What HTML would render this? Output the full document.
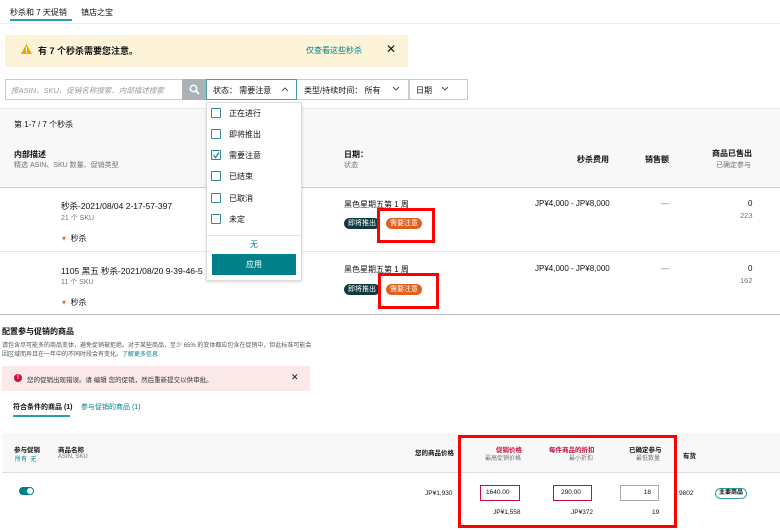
<!DOCTYPE html>
<html><head><meta charset="utf-8"><style>
*{margin:0;padding:0;box-sizing:border-box}
body{width:780px;height:530px;overflow:hidden;background:#fff;font-family:"Liberation Sans","Noto Sans CJK SC",sans-serif;color:#0f1111;position:relative;font-size:8px}
.a{position:absolute;white-space:nowrap}
.g{color:#6f7373}
.t{color:#00818a}
.cb{position:absolute;width:10px;height:10px;border:1px solid #2f8a94;border-radius:1px;background:#fff}
.rb{position:absolute;border:3px solid #f00}
.pill{position:absolute;height:11px;border-radius:6px;color:#fff;font-size:7px;line-height:11px;padding:0 4px}
</style></head><body>
<div class="a" style="left:10px;top:7px;font-size:8px">秒杀和 7 天促销</div>
<div class="a" style="left:81px;top:7px;font-size:8px">镇店之宝</div>
<div class="a" style="left:10px;top:19px;width:62px;height:2px;background:#2f9ea8"></div>
<div class="a" style="left:0;top:23px;width:780px;height:1px;background:#eee"></div>

<div class="a" style="left:5px;top:35px;width:403px;height:32px;background:#fcf3d8"></div>
<svg class="a" style="left:21px;top:44px" width="11" height="10" viewBox="0 0 11 10"><path d="M5.5 0L11 10H0z" fill="#f0a500"/><rect x="5" y="3" width="1" height="4" fill="#fff"/><rect x="5" y="8" width="1" height="1" fill="#fff"/></svg>
<div class="a" style="left:38px;top:44px;font-size:9px;font-weight:bold">有 7 个秒杀需要您注意。</div>
<div class="a t" style="left:306px;top:45px;font-size:8px">仅查看这些秒杀</div>
<div class="a" style="left:386px;top:42px;font-size:12px">✕</div>

<div class="a" style="left:5px;top:79px;width:177px;height:21px;border:1px solid #ccc;border-right:none"></div>
<div class="a g" style="left:11px;top:85px;font-size:7.5px;font-style:italic;color:#999">按ASIN、SKU、促销名称搜索、内部描述搜索</div>
<div class="a" style="left:182px;top:79px;width:24px;height:21px;background:#a9b3b5"></div>
<svg class="a" style="left:189px;top:84px" width="11" height="11" viewBox="0 0 11 11"><circle cx="4.5" cy="4.5" r="3.2" stroke="#fff" stroke-width="1.5" fill="none"/><path d="M7 7L10 10" stroke="#fff" stroke-width="1.8"/></svg>
<div class="a" style="left:206px;top:79px;width:91px;height:21px;border:1px solid #4a9aa3"></div>
<div class="a" style="left:213px;top:85px;font-size:8px">状态：&nbsp;需要注意</div>
<svg class="a" style="left:281px;top:87px" width="8" height="5"><path d="M1 4L4 1L7 4" stroke="#555" fill="none"/></svg>
<div class="a" style="left:297px;top:79px;width:112px;height:21px;border:1px solid #ccc;border-left:none"></div>
<div class="a" style="left:304px;top:85px;font-size:8px">类型/持续时间：&nbsp;所有</div>
<svg class="a" style="left:392px;top:86px" width="8" height="5"><path d="M1 1L4 4L7 1" stroke="#555" fill="none"/></svg>
<div class="a" style="left:409px;top:79px;width:59px;height:21px;border:1px solid #ccc"></div>
<div class="a" style="left:416px;top:85px;font-size:8px">日期</div>
<svg class="a" style="left:441px;top:86px" width="8" height="5"><path d="M1 1L4 4L7 1" stroke="#555" fill="none"/></svg>

<div class="a" style="left:0;top:108px;width:780px;height:79px;background:#f8f8f8;border-top:1px solid #e7e7e7"></div>
<div class="a" style="left:14px;top:119px;font-size:8px">第 1-7 / 7 个秒杀</div>
<div class="a" style="left:14px;top:149px;font-size:8px;font-weight:bold">内部描述</div>
<div class="a g" style="left:14px;top:160px;font-size:7px">精选 ASIN、SKU 数量、促销类型</div>
<div class="a" style="left:344px;top:149px;font-size:8px;font-weight:bold">日期：</div>
<div class="a g" style="left:344px;top:160px;font-size:7px">状态</div>
<div class="a" style="left:577px;top:154px;font-size:8px;font-weight:bold">秒杀费用</div>
<div class="a" style="left:645px;top:154px;font-size:8px;font-weight:bold">销售额</div>
<div class="a" style="left:712px;top:148px;font-size:8px;font-weight:bold">商品已售出</div>
<div class="a g" style="left:716px;top:160px;font-size:7px">已确定参与</div>
<div class="a" style="left:0;top:187px;width:780px;height:1px;background:#ccc"></div>

<div class="a" style="left:61px;top:200px;font-size:8.5px">秒杀-2021/08/04 2-17-57-397</div>
<div class="a g" style="left:61px;top:213px;font-size:7px">21 个 SKU</div>
<div class="a" style="left:62px;top:233px;font-size:8px"><span style="color:#e8702a">▾</span>&nbsp; 秒杀</div>
<div class="a" style="left:344px;top:199px;font-size:8px">黑色星期五第 1 周</div>
<div class="pill" style="left:344px;top:218px;background:#0f3a40">即将推出</div>
<div class="pill" style="left:386px;top:218px;background:#e2601d">需要注意</div>
<div class="a" style="left:535px;top:199px;font-size:8px">JP¥4,000 - JP¥8,000</div>
<div class="a g" style="left:661px;top:199px">—</div>
<div class="a" style="left:748px;top:199px;font-size:8px">0</div>
<div class="a g" style="left:740px;top:211px;font-size:7.5px">223</div>
<div class="a" style="left:0;top:251px;width:780px;height:1px;background:#e7e7e7"></div>

<div class="a" style="left:61px;top:265px;font-size:8.5px">1105 黑五 秒杀-2021/08/20 9-39-46-5</div>
<div class="a g" style="left:61px;top:277px;font-size:7px">11 个 SKU</div>
<div class="a" style="left:62px;top:297px;font-size:8px"><span style="color:#e8702a">▾</span>&nbsp; 秒杀</div>
<div class="a" style="left:344px;top:264px;font-size:8px">黑色星期五第 1 周</div>
<div class="pill" style="left:344px;top:284px;background:#0f3a40">即将推出</div>
<div class="pill" style="left:386px;top:284px;background:#e2601d">需要注意</div>
<div class="a" style="left:535px;top:264px;font-size:8px">JP¥4,000 - JP¥8,000</div>
<div class="a g" style="left:661px;top:264px">—</div>
<div class="a" style="left:748px;top:264px;font-size:8px">0</div>
<div class="a g" style="left:740px;top:276px;font-size:7.5px">162</div>
<div class="a" style="left:0;top:314px;width:780px;height:1px;background:#bbb"></div>

<div class="rb" style="left:377px;top:208px;width:58px;height:35px"></div>
<div class="rb" style="left:378px;top:273px;width:61px;height:36px"></div>

<!-- dropdown -->
<div class="a" style="left:206px;top:102px;width:96px;height:179px;background:#fff;border:1px solid #ddd;box-shadow:0 1px 3px rgba(0,0,0,.15)"></div>
<div class="cb" style="left:211px;top:108px"></div><div class="a" style="left:229px;top:108px;font-size:8px">正在进行</div>
<div class="cb" style="left:211px;top:129px"></div><div class="a" style="left:229px;top:129px;font-size:8px">即将推出</div>
<div class="cb" style="left:211px;top:150px;background:#eef6f7"></div><svg class="a" style="left:212px;top:151px" width="8" height="8"><path d="M1.5 4L3.5 6.5L7 1.5" stroke="#2f8a94" stroke-width="1.3" fill="none"/></svg><div class="a" style="left:229px;top:150px;font-size:8px">需要注意</div>
<div class="cb" style="left:211px;top:171px"></div><div class="a" style="left:229px;top:171px;font-size:8px">已结束</div>
<div class="cb" style="left:211px;top:193px"></div><div class="a" style="left:229px;top:193px;font-size:8px">已取消</div>
<div class="cb" style="left:211px;top:214px"></div><div class="a" style="left:229px;top:214px;font-size:8px">未定</div>
<div class="a" style="left:207px;top:235px;width:94px;height:1px;background:#e3e3e3"></div>
<div class="a t" style="left:250px;top:239px;font-size:8px">无</div>
<div class="a" style="left:212px;top:254px;width:84px;height:21px;background:#00818a;color:#fff;font-size:8px;text-align:center;line-height:21px">应用</div>

<!-- bottom -->
<div class="a" style="left:2px;top:326px;font-size:8px;font-weight:bold">配置参与促销的商品</div>
<div class="a g" style="left:2px;top:340px;font-size:6px;color:#555">请包含尽可能多的商品变体，避免促销被拒绝。对于某些商品，至少 65% 的变体都应包含在促销中，但此标准可能会</div>
<div class="a g" style="left:2px;top:349px;font-size:6px;color:#555">因区域而异且在一年中的不同时段会有变化。<span class="t">了解更多信息</span></div>
<div class="a" style="left:2px;top:366px;width:308px;height:25px;background:#fbe9e9"></div>
<div class="a" style="left:14px;top:374px;width:8px;height:8px;border-radius:50%;background:#cc0c39;color:#fff;font-size:6px;text-align:center;line-height:8px;font-weight:bold">!</div>
<div class="a" style="left:27px;top:374px;font-size:6.5px;color:#333">您的促销出现错误。请 编辑 您的促销，然后重新提交以供审批。</div>
<div class="a" style="left:291px;top:372px;font-size:9px">✕</div>
<div class="a" style="left:13px;top:402px;font-size:7px;font-weight:bold">符合条件的商品 (1)</div>
<div class="a t" style="left:81px;top:402px;font-size:7px">参与促销的商品 (1)</div>
<div class="a" style="left:13px;top:415px;width:57px;height:2px;background:#2f9ea8"></div>

<div class="a" style="left:2px;top:433px;width:778px;height:40px;background:#f8f8f8;border-bottom:1px solid #ddd"></div>
<div class="a" style="left:14px;top:444px;font-size:6.5px;font-weight:bold">参与促销</div>
<div class="a t" style="left:15px;top:454px;font-size:6px">所有 &nbsp;无</div>
<div class="a" style="left:58px;top:444px;font-size:6.5px;font-weight:bold">商品名称</div>
<div class="a g" style="left:58px;top:454px;font-size:6px">ASIN, SKU</div>
<div class="a" style="left:415px;top:447px;font-size:6.5px;font-weight:bold">您的商品价格</div>
<div class="a" style="left:496px;top:444px;font-size:6.5px;font-weight:bold;color:#c40d3d">促销价格</div>
<div class="a g" style="left:485px;top:453px;font-size:6px">最高促销价格</div>
<div class="a" style="left:549px;top:444px;font-size:6.5px;font-weight:bold;color:#c40d3d">每件商品的折扣</div>
<div class="a g" style="left:569px;top:453px;font-size:6px">最小折扣</div>
<div class="a" style="left:629px;top:444px;font-size:6.5px;font-weight:bold">已确定参与</div>
<div class="a g" style="left:636px;top:453px;font-size:6px">最低数量</div>
<div class="a" style="left:683px;top:450px;font-size:6.5px;font-weight:bold">有货</div>

<div class="a" style="left:19px;top:487px;width:15px;height:8px;border-radius:4px;background:#00818a"></div>
<div class="a" style="left:27px;top:488px;width:6px;height:6px;border-radius:50%;background:#fff"></div>
<div class="a" style="left:425px;top:490px;font-size:6.5px">JP¥1,930</div>
<div class="a" style="left:480px;top:485px;width:40px;height:16px;border:1px solid #c40d3d;font-size:6.5px;line-height:14px;padding-left:5px">1640.00</div>
<div class="a" style="left:553px;top:485px;width:39px;height:16px;border:1px solid #c40d3d;font-size:6.5px;line-height:14px;padding-left:7px">290.00</div>
<div class="a" style="left:620px;top:485px;width:39px;height:16px;border:1px solid #aaa;font-size:6.5px;line-height:14px;text-align:right;padding-right:7px">18</div>
<div class="a" style="left:493px;top:509px;font-size:6.5px">JP¥1,558</div>
<div class="a" style="left:571px;top:509px;font-size:6.5px">JP¥372</div>
<div class="a" style="left:652px;top:509px;font-size:6.5px">19</div>
<div class="a" style="left:679px;top:490px;font-size:6.5px">9802</div>
<div class="a" style="left:715px;top:488px;width:32px;height:11px;border:1px solid #2f9ea8;border-radius:6px;font-size:6px;text-align:center;line-height:9px;font-weight:bold">主要商品</div>

<div class="rb" style="left:458px;top:435px;width:219px;height:93px"></div>
</body></html>
